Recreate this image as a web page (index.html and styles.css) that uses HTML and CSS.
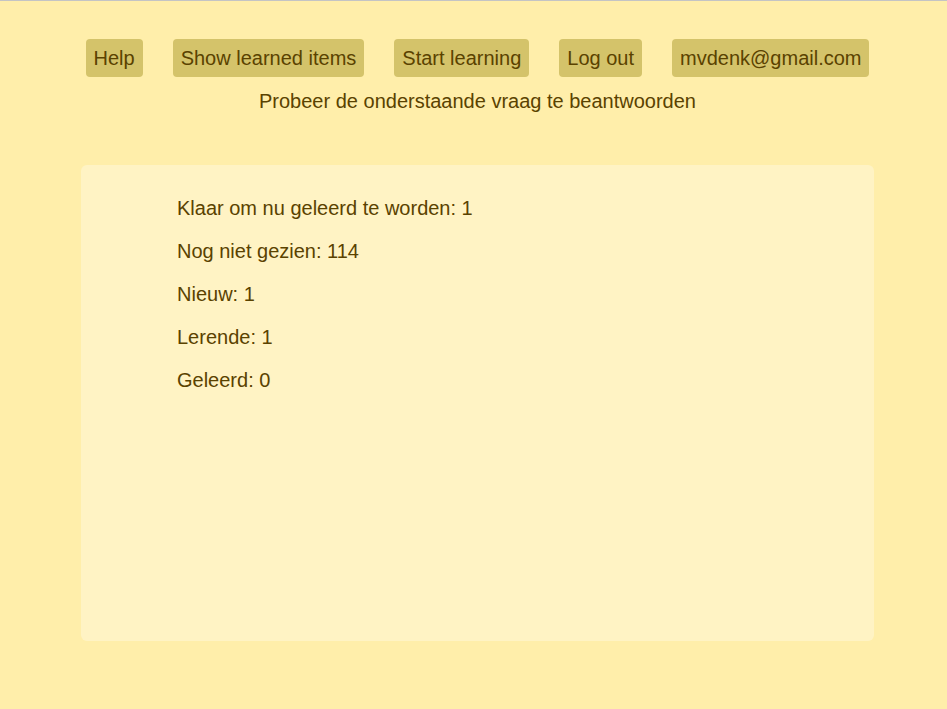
FILE: index.html
```html
<!DOCTYPE html>
<html>
<head>
<meta charset="utf-8">
<link rel="stylesheet" href="styles.css">
</head>
<body>
<div class="page">
  <nav class="nav">
    <button class="btn">Help</button>
    <button class="btn">Show learned items</button>
    <button class="btn">Start learning</button>
    <button class="btn">Log out</button>
    <button class="btn">mvdenk@gmail.com</button>
  </nav>
  <p class="subtitle">Probeer de onderstaande vraag te beantwoorden</p>
  <section class="card">
    <p class="stat">Klaar om nu geleerd te worden: 1</p>
    <p class="stat">Nog niet gezien: 114</p>
    <p class="stat">Nieuw: 1</p>
    <p class="stat">Lerende: 1</p>
    <p class="stat">Geleerd: 0</p>
  </section>
</div>
</body>
</html>
```
FILE: styles.css
```css
html, body {
  margin: 0;
  padding: 0;
  height: 100%;
}
body {
  background: #ffeeaa;
  border-top: 1px solid #c4c4c4;
  box-sizing: border-box;
  font-family: "Liberation Sans", Arial, sans-serif;
  color: #5a4200;
  font-size: 20px;
}
.page {
  display: flex;
  flex-direction: column;
  align-items: center;
  padding-left: 8px;
}
.nav {
  display: flex;
  justify-content: center;
  gap: 30px;
  margin-top: 38px;
}
.btn {
  font: inherit;
  color: inherit;
  background: #d4c36a;
  border: none;
  border-radius: 4px;
  padding: 0 8px;
  height: 38px;
  line-height: 38px;
  cursor: pointer;
}
.subtitle {
  margin: 12px 0 0;
  line-height: 24px;
}
.card {
  box-sizing: border-box;
  width: 793px;
  height: 476px;
  margin-top: 52px;
  background: #fff3c4;
  border-radius: 6px;
  padding: 32px 0 0 96px;
}
.stat {
  margin: 0 0 20px;
  line-height: 23px;
}
```
